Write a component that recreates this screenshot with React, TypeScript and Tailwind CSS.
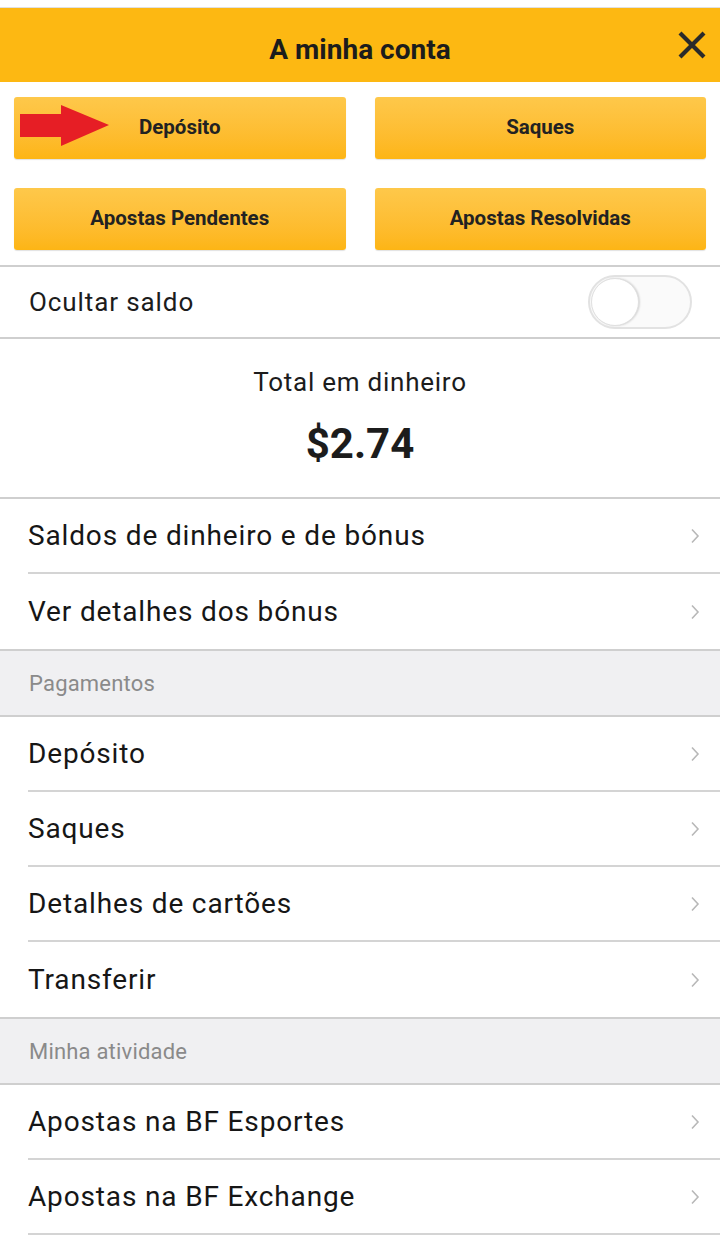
import React from "react";

function Chevron() {
    return (
        <svg width="10" height="16" viewBox="0 0 10 16" className="shrink-0">
            <path d="M2 1.5 L8 8 L2 14.5" fill="none" stroke="#b8b8b8" strokeWidth="1.6" />
        </svg>
    );
}

function RedArrow() {
    return (
        <svg width="90" height="42" viewBox="0 0 90 42" className="absolute left-[6px] top-[8px]">
            <path d="M0 9 L41 9 L41 0 L89 20 L41 41 L41 32 L0 32 Z" fill="#e61e25" />
        </svg>
    );
}

function YellowButton({ label, arrow }: { label: string; arrow?: boolean }) {
    return (
        <button className="relative h-[62px] rounded-[3px] bg-gradient-to-b from-[#fec84a] to-[#fdb514] pb-[1px] text-[20.5px] font-bold text-[#222] shadow-[0_1px_1px_rgba(0,0,0,0.12)]">
            {arrow && <RedArrow />}
            {label}
        </button>
    );
}

function Row({ label, last }: { label: string; last?: boolean }) {
    return (
        <div className="pl-[28px]">
            <div
                className={
                    "flex h-[75px] items-center justify-between pr-[20px] " +
                    (last ? "" : "border-b-2 border-[#d4d4d4]")
                }
            >
                <span className="text-[28px] tracking-[0.85px] text-[#161616]">{label}</span>
                <Chevron />
            </div>
        </div>
    );
}

function SectionHeader({ label }: { label: string }) {
    return (
        <div className="flex h-[68px] items-center border-y-2 border-[#cfcfcf] bg-[#f0f0f2] pl-[29px] text-[22px] tracking-[0.2px] text-[#8a8a8a]">
            {label}
        </div>
    );
}

export default function App() {
    return (
        <div className="min-h-[1259px] w-[720px] bg-white pt-[7px] font-['Roboto',sans-serif]">
            <div className="border-t border-[#e0e0e0]" />
            <header className="relative flex h-[74px] items-center justify-center bg-[#fdb812] pt-[9px]">
                <h1 className="text-[28px] font-bold text-[#1c1c1c]">A minha conta</h1>
                <svg width="30" height="30" viewBox="0 0 30 30" className="absolute right-[13px] top-[22px]">
                    <path d="M3 3 L27 27 M27 3 L3 27" stroke="#2a2a2a" strokeWidth="4.2" />
                </svg>
            </header>

            <div className="grid grid-cols-2 gap-x-[29px] gap-y-[29px] px-[14px] pt-[15px] pb-[15px]">
                <YellowButton label="Depósito" arrow />
                <YellowButton label="Saques" />
                <YellowButton label="Apostas Pendentes" />
                <YellowButton label="Apostas Resolvidas" />
            </div>

            <div className="flex h-[74px] items-center justify-between border-y-2 border-[#cfcfcf] pl-[29px] pr-[28px]">
                <span className="text-[26px] tracking-[0.9px] text-[#1c1c1c]">Ocultar saldo</span>
                <div className="flex h-[54px] w-[104px] items-center rounded-full border-2 border-[#e2e2e2] bg-[#fafafa] px-[1px]">
                    <div className="h-[48px] w-[48px] rounded-full border border-[#e0e0e0] bg-white shadow-[1px_0_2px_rgba(0,0,0,0.15)]" />
                </div>
            </div>

            <div className="flex h-[160px] flex-col items-center border-b-2 border-[#cfcfcf] pt-[24px]">
                <span className="text-[26px] tracking-[0.75px] text-[#1c1c1c]">Total em dinheiro</span>
                <span className="mt-[10px] text-[42px] font-bold text-[#1c1c1c]">$2.74</span>
            </div>

            <Row label="Saldos de dinheiro e de bónus" />
            <Row label="Ver detalhes dos bónus" last />

            <SectionHeader label="Pagamentos" />
            <Row label="Depósito" />
            <Row label="Saques" />
            <Row label="Detalhes de cartões" />
            <Row label="Transferir" last />

            <SectionHeader label="Minha atividade" />
            <Row label="Apostas na BF Esportes" />
            <Row label="Apostas na BF Exchange" />
        </div>
    );
}
